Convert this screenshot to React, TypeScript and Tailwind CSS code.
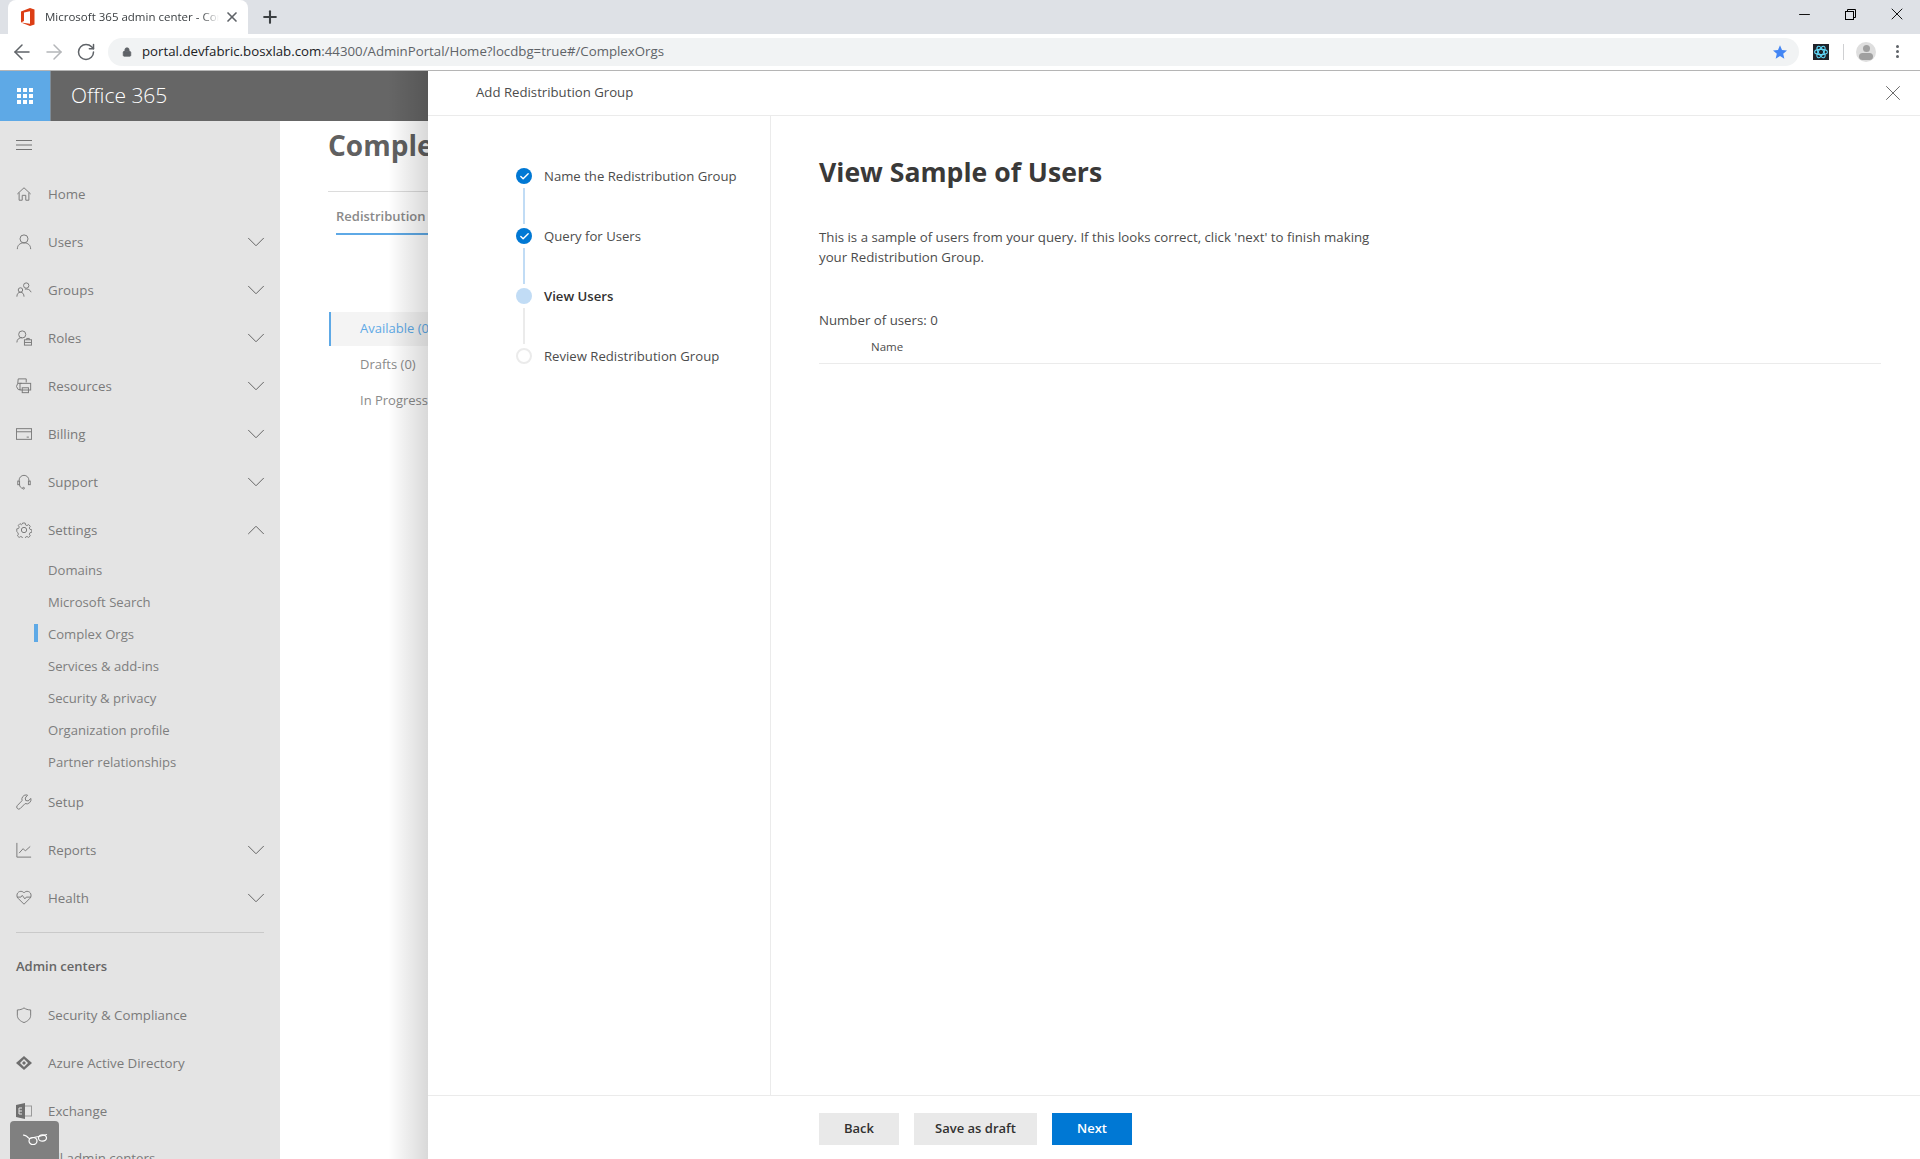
import React from "react";
import { ChevronDown, ChevronUp, ArrowLeft, ArrowRight, RotateCw, Lock, Plus, X, Minus, Check } from "lucide-react";

const S = "currentColor";

function Ic({ children }: { children: React.ReactNode }) {
  return (
    <svg width="16" height="16" viewBox="0 0 18 18" fill="none" stroke={S} strokeWidth="1.1">
      {children}
    </svg>
  );
}

const icons: Record<string, React.ReactNode> = {
  home: <Ic><path d="M1.5 9 9 2l7.500 7M3.500 7.500v8.500h3.500v-5.500h4v5.500h3.500V7.500" /></Ic>,
  user: <Ic><circle cx="9" cy="5.500" r="4.500" /><path d="M1.500 17c0-4.500 3-7 7.500-7s7.500 2.500 7.500 7" /></Ic>,
  groups: <Ic><circle cx="11.500" cy="4" r="3" /><circle cx="5" cy="9" r="2.500" /><path d="M1 16.500c0-3 1.500-5 4-5s4 2 4 5M10 8c3-.5 6 .5 7 3.500" /></Ic>,
  roles: <Ic><circle cx="7" cy="5" r="4" /><path d="M1 14c0-3.500 2.500-5.500 6-5.500" /><rect x="9.500" y="11" width="8" height="6" /><path d="M12 11V9.500h3V11M9.500 14h8" /></Ic>,
  resources: <Ic><path d="M6.500 6H2l.5-5h9v4M5 13H2.500L.500 9.500 2 6" /><rect x="4.500" y="6" width="12" height="7.500" /><rect x="7" y="11" width="7" height="5.500" /></Ic>,
  billing: <Ic><rect x="0.500" y="3" width="17" height="12" /><path d="M.5 6.500h17M12 12.500h2.500" /></Ic>,
  support: <Ic><path d="M3.500 8.500V7a5.500 5.500 0 0 1 11 0v1.500" /><rect x="2" y="8" width="2" height="4" /><rect x="14" y="8" width="2" height="4" /><path d="M4 12c0 2 1.500 4 3.500 4" /><circle cx="8.500" cy="16" r="1" /></Ic>,
  settings: <Ic><circle cx="9" cy="9" r="3" /><path d="M7.500 1h3l.5 2.300 1.700.8 2-1.200 2 2-1.200 2 .8 1.700 2.200.5v3l-2.200.5-.8 1.700 1.200 2-2 2-2-1.200-1.700.8-.5 2.200h-3l-.5-2.200-1.700-.8-2 1.200-2-2 1.200-2-.8-1.700L.5 11V8l2.200-.5.8-1.700-1.200-2 2-2 2 1.200L7 2.300z" transform="translate(.4 .2) scale(.94)" /></Ic>,
  setup: <Ic><path d="M11.500 1a5 5 0 0 0-4.700 6.500L1.500 13a2.300 2.300 0 0 0 3.300 3.300l5.400-5.500A5 5 0 0 0 16.800 5l-3.200 2.800-2.700-.5-.5-2.800L13 1.300A5 5 0 0 0 11.500 1z" /></Ic>,
  reports: <Ic><path d="M1 1v16h16M3.500 12.500 8 7.500l2.500 2.500 5.500-5" /></Ic>,
  health: <Ic><path d="M9 16 2.500 9.500C-.5 6.500 1.500 1.500 5.500 1.500c1.600 0 2.700.7 3.500 1.800.8-1.100 1.900-1.800 3.500-1.800 4 0 6 5 3 8L9 16z" /><path d="M1 8h4.500l1.500-2 3 4 1.500-2H17" /></Ic>,
  shield: <Ic><path d="M9 1c2 1.500 4.500 2.300 7.500 2.300v6C16.500 13.500 13 16 9 17.500 5 16 1.500 13.500 1.500 9.300v-6C4.500 3.300 7 2.500 9 1z" /></Ic>,
};

function NavRow({ icon, label, chev, up, mt }: { icon: string; label: string; chev?: boolean; up?: boolean; mt?: string }) {
  return (
    <div className={`h-12 shrink-0 flex items-center pl-4 pr-4 ${mt ?? ""}`}>
      <span className="w-8 flex items-center text-[#7a7a7a]">{icons[icon]}</span>
      <span className="flex-1 pt-[1px] text-[13.3px] text-[#7a7a7a]">{label}</span>
      {chev && (up ? <ChevronUp size={30} strokeWidth={0.8} className="text-[#666] -mr-[7px]" /> : <ChevronDown size={30} strokeWidth={0.8} className="text-[#666] -mr-[7px]" />)}
    </div>
  );
}

function SubRow({ label, active }: { label: string; active?: boolean }) {
  return (
    <div className="h-8 shrink-0 flex items-center pl-12 pt-[2px] relative text-[13.1px] text-[#7e7e7e]">
      {active && <span className="absolute left-[34px] top-[6px] w-[4px] h-[18px] bg-[#5ea9e6]" />}
      {label}
    </div>
  );
}

function Step({ label, state, last }: { label: string; state: "done" | "current" | "todo"; last?: boolean }) {
  return (
    <div className="flex">
      <div className="w-4 flex flex-col items-center mr-[12px]">
        {state === "done" && (
          <span className="w-4 h-4 rounded-full bg-[#0078d4] flex items-center justify-center">
            <Check size={11} strokeWidth={3} className="text-white" />
          </span>
        )}
        {state === "current" && <span className="w-4 h-4 rounded-full bg-[#c1dcf5]" />}
        {state === "todo" && <span className="w-4 h-4 rounded-full bg-white border-2 border-[#ebebeb]" />}
        {!last && <span className={`w-[2px] h-[36px] mt-[4px] mb-[4px] ${state === "done" ? "bg-[#c1dcf5]" : "bg-[#ebebeb]"}`} />}
      </div>
      <span className={`text-[13.15px] leading-4 ${state === "current" ? "font-semibold text-[#323130]" : "text-[#4c4c4c]"}`}>{label}</span>
    </div>
  );
}

export default function App() {
  return (
    <div className="w-[1920px] h-[1159px] overflow-hidden flex flex-col bg-white font-['Open_Sans','Noto_Sans',sans-serif]">
      {/* Tab strip */}
      <div className="h-[34px] shrink-0 bg-[#dee1e6] flex items-end relative">
        <div className="ml-2 w-[240px] h-[34px] bg-white rounded-t-lg flex items-center pl-[12px] pr-2">
          <svg width="16" height="18" viewBox="0 0 16 18" className="mr-[9px] shrink-0">
            <path d="M1 3.500 10 0l4.500 1.500v15L10 18l-9-3.500 9 1.200V3.200L4 4.500V13l-3 1.500z" fill="#dc3e15" />
          </svg>
          <span className="w-[174px] overflow-hidden whitespace-nowrap text-[11.5px] text-[#3c4043] [mask-image:linear-gradient(90deg,#000_90%,transparent)]">Microsoft 365 admin center - Complex Orgs</span>
          <X size={16} strokeWidth={2.5} className="ml-auto text-[#5f6368]" />
        </div>
        <Plus size={20} strokeWidth={2.5} className="ml-[12px] mb-[7px] text-[#3c4043]" />
        <div className="ml-auto h-full flex items-center pr-[13px] pb-[6px]">
          <Minus size={17} strokeWidth={1.300} className="text-black" />
          <svg width="11" height="11" viewBox="0 0 11 11" fill="none" stroke="black" strokeWidth="1" className="ml-[32px]"><rect x="0.500" y="2.500" width="8" height="8" /><path d="M2.500 2.500v-2h8v8h-2" /></svg>
          <X size={20} strokeWidth={1.100} className="ml-[31px] text-black" />
        </div>
      </div>
      {/* Toolbar */}
      <div className="h-[37px] shrink-0 bg-white border-b border-[#b5b5b5] flex items-center pb-[1px]">
        <ArrowLeft size={24} strokeWidth={1.500} className="ml-[10px] text-[#5f6368]" />
        <ArrowRight size={24} strokeWidth={1.500} className="ml-[8px] text-[#b4b6b9]" />
        <RotateCw size={20} strokeWidth={1.800} className="ml-[10px] text-[#5f6368]" />
        <div className="ml-[12px] w-[1691px] h-[28px] rounded-full bg-[#f1f3f4] flex items-center pl-[14px] pr-[3px]">
          <Lock size={10} fill="#5f6368" className="text-[#5f6368]" />
          <span className="ml-[10px] text-[13.25px] text-[#202124] whitespace-nowrap">portal.devfabric.bosxlab.com<span className="text-[#5f6368]">:44300/AdminPortal/Home?locdbg=true#/ComplexOrgs</span></span>
          <svg width="16" height="16" viewBox="0 0 24 24" className="ml-auto mr-[8px]"><path d="m12 2 3 7 7.500.6-5.700 4.900 1.700 7.500L12 18l-6.500 4 1.700-7.500L1.500 9.600 9 9z" fill="#4285f4" /></svg>
        </div>
        <div className="ml-[14px] w-4 h-4 bg-[#20232a] flex items-center justify-center">
          <svg width="14" height="14" viewBox="0 0 24 24" fill="none" stroke="#61dafb" strokeWidth="1.800"><ellipse cx="12" cy="12" rx="11" ry="4.500" /><ellipse cx="12" cy="12" rx="11" ry="4.500" transform="rotate(60 12 12)" /><ellipse cx="12" cy="12" rx="11" ry="4.500" transform="rotate(120 12 12)" /></svg>
        </div>
        <span className="ml-[14px] w-px h-4 bg-[#cfd0d2]" />
        <div className="ml-[12px] w-5 h-5 rounded-full bg-[#dedede] overflow-hidden flex flex-col items-center">
          <span className="mt-[3px] w-[7px] h-[7px] rounded-full bg-[#a0a0a0]" />
          <span className="mt-[1px] w-[14px] h-[7px] rounded-full bg-[#a0a0a0]" />
        </div>
        <div className="ml-[20px] flex flex-col gap-[2px]">
          <span className="w-[3px] h-[3px] rounded-full bg-[#5f6368]" />
          <span className="w-[3px] h-[3px] rounded-full bg-[#5f6368]" />
          <span className="w-[3px] h-[3px] rounded-full bg-[#5f6368]" />
        </div>
      </div>
      {/* App */}
      <div className="flex-1 relative flex flex-col min-h-0">
        <div className="h-[50px] shrink-0 bg-[#666666] flex items-center">
          <div className="w-[51px] h-full bg-[#5ea9e6] border-r border-[#7d8c99] flex items-center justify-center">
            <div className="grid grid-cols-3 gap-[2px]">
              {Array.from({ length: 9 }).map((_, i) => (
                <span key={i} className="w-1 h-1 bg-white" />
              ))}
            </div>
          </div>
          <span className="ml-5 text-[21px] font-light text-white">Office 365</span>
        </div>
        <div className="flex-1 flex min-h-0">
          {/* Sidebar */}
          <div className="w-[280px] shrink-0 bg-[#e4e4e4] overflow-hidden flex flex-col relative">
            <div className="h-12 shrink-0 flex items-center pl-4">
              <svg width="16" height="10" viewBox="0 0 16 10" stroke="#737373" strokeWidth="1"><path d="M0 .5h16M0 5h16M0 9.500h16" /></svg>
            </div>
            <NavRow icon="home" label="Home" mt="mt-[1px]" />
            <NavRow icon="user" label="Users" chev />
            <NavRow icon="groups" label="Groups" chev />
            <NavRow icon="roles" label="Roles" chev />
            <NavRow icon="resources" label="Resources" chev />
            <NavRow icon="billing" label="Billing" chev />
            <NavRow icon="support" label="Support" chev />
            <NavRow icon="settings" label="Settings" chev up />
            <SubRow label="Domains" />
            <SubRow label="Microsoft Search" />
            <SubRow label="Complex Orgs" active />
            <SubRow label="Services & add-ins" />
            <SubRow label="Security & privacy" />
            <SubRow label="Organization profile" />
            <SubRow label="Partner relationships" />
            <NavRow icon="setup" label="Setup" />
            <NavRow icon="reports" label="Reports" chev />
            <NavRow icon="health" label="Health" chev />
            <div className="mx-4 mt-[10px] h-px shrink-0 bg-[#c9c9c9]" />
            <div className="mt-[26px] pl-4 h-4 shrink-0 flex items-center text-[13px] font-semibold text-[#666]">Admin centers</div>
            <NavRow icon="shield" label="Security & Compliance" mt="mt-[16px]" />
            <div className="h-12 shrink-0 flex items-center pl-4">
              <span className="w-8 flex items-center">
                <svg width="16" height="14" viewBox="0 0 16 14"><path d="M8 0 16 7l-8 7-8-7z" fill="#6e6e6e" /><path d="M8 3 12 7 8 11 4 7z" fill="#e4e4e4" /><path d="M8 5 10 7 8 9 6 7z" fill="#6e6e6e" /></svg>
              </span>
              <span className="pt-[1px] text-[13.3px] text-[#7a7a7a]">Azure Active Directory</span>
            </div>
            <div className="h-12 shrink-0 flex items-center pl-4">
              <span className="w-8 flex items-center">
                <svg width="16" height="16" viewBox="0 0 16 16"><rect x="7" y="3" width="8.500" height="10" fill="none" stroke="#9a9a9a" /><path d="M0 2 9 0v16l-9-2z" fill="#6e6e6e" /><path d="M3 5h3M3 8h3M3 11h3M3 5v6" stroke="#e4e4e4" fill="none" /></svg>
              </span>
              <span className="pt-[1px] text-[13.3px] text-[#7a7a7a]">Exchange</span>
            </div>
            <div className="h-12 shrink-0 flex items-center pl-12 text-[13.3px] text-[#7a7a7a]">All admin centers</div>
            <div className="absolute left-[10px] bottom-0 w-[49px] h-[38px] bg-[#808080] rounded-t-[4px] flex justify-center pt-[12px]">
              <svg width="26" height="14" viewBox="0 0 26 14" fill="none" stroke="white" strokeWidth="1.200"><path d="M1 2c2.500.2 4.500 1.500 6 3.500" /><ellipse cx="11" cy="8" rx="4" ry="3.500" /><ellipse cx="20.500" cy="5" rx="4" ry="3.200" /><path d="M7 5.500 16.500 3.500 25 1.500" /></svg>
            </div>
          </div>
          {/* Main underlying */}
          <div className="flex-1 min-w-0 pl-[48px] flex flex-col">
            <h1 className="mt-[7px] text-[28px] leading-[34px] font-bold text-[#606060]">Complex Orgs</h1>
            <div className="mt-[29px] border-t border-[#dcdcdc] pl-2 pt-[11px]">
              <div className="inline-block text-[13px] font-semibold text-[#8a8a8a] border-b-2 border-[#5ea9e6] h-[28px] w-[400px]">Redistribution Groups</div>
            </div>
            <div className="mt-[77px] flex flex-col text-[13px]">
              <div className="h-[34px] ml-px border-l-2 border-[#5ea9e6] bg-[#f4f4f4] pl-[29px] flex items-center text-[#5ea9e6]">Available (0)</div>
              <div className="h-[38px] pl-[32px] flex items-center text-[#8a8a8a]">Drafts (0)</div>
              <div className="h-[34px] pl-[32px] flex items-center text-[#8a8a8a]">In Progress (0)</div>
            </div>
          </div>
        </div>
        {/* Shadow over page */}
        <div className="absolute left-[388px] top-0 bottom-0 w-[40px] bg-gradient-to-r from-transparent to-black/15" />
        {/* Panel */}
        <div className="absolute left-[428px] right-0 top-0 bottom-0 bg-white flex flex-col">
          <div className="h-[45px] shrink-0 border-b border-[#ebebeb] flex items-center pl-[48px] pr-[14px]">
            <span className="text-[13.2px] text-[#4c4c4c]">Add Redistribution Group</span>
            <X size={26} strokeWidth={0.8} className="ml-auto text-[#555]" />
          </div>
          <div className="flex-1 flex min-h-0">
            <div className="w-[343px] shrink-0 border-r border-[#ebebeb] pl-[88px] pt-[52px]">
              <Step label="Name the Redistribution Group" state="done" />
              <Step label="Query for Users" state="done" />
              <Step label="View Users" state="current" />
              <Step label="Review Redistribution Group" state="todo" last />
            </div>
            <div className="flex-1 pl-[48px] pr-[39px]">
              <h2 className="mt-[35px] text-[26.6px] leading-[42px] font-bold text-[#3a3938]">View Sample of Users</h2>
              <p className="mt-[34px] w-[570px] text-[13.25px] leading-5 text-[#4c4c4c]">This is a sample of users from your query. If this looks correct, click 'next' to finish making your Redistribution Group.</p>
              <div className="mt-[43px] text-[13.25px] leading-5 text-[#4c4c4c]">Number of users: 0</div>
              <div className="mt-[7px] h-[27px] border-b border-[#ebebeb] pl-[52px] text-[11.5px] leading-5 text-[#4c4c4c]">Name</div>
            </div>
          </div>
          <div className="h-[64px] shrink-0 border-t border-[#ebebeb] pl-[391px] pt-[17px] flex items-start gap-[15px]">
            <button className="w-[80px] h-8 bg-[#e9e9e9] text-[13px] font-semibold text-[#323130]">Back</button>
            <button className="w-[123px] h-8 bg-[#e9e9e9] text-[13px] font-semibold text-[#323130]">Save as draft</button>
            <button className="w-[80px] h-8 bg-[#0078d4] text-[13px] font-semibold text-white">Next</button>
          </div>
        </div>
      </div>
    </div>
  );
}
